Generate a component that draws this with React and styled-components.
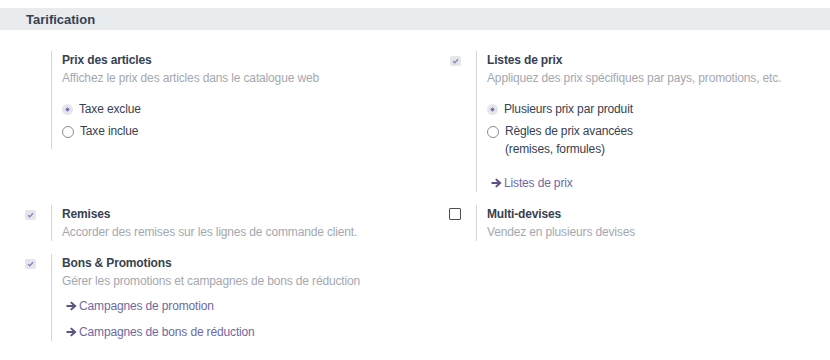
import styled, { createGlobalStyle } from "styled-components";

const GlobalStyle = createGlobalStyle`
  html, body {
    margin: 0;
    padding: 0;
    background: #fff;
  }
  body {
    font-family: "Liberation Sans", Arial, sans-serif;
    font-size: 12px;
    letter-spacing: -0.15px;
    color: #374151;
  }
`;

function Arrow() {
  return (
    <svg width="11" height="10" viewBox="0 0 11 10">
      <path
        d="M5.5 0.4 L10.6 5 L5.5 9.6 L4.1 8.2 L6.5 6 L0.5 6 L0.5 4 L6.5 4 L4.1 1.8 Z"
        fill="#5c5283"
      />
    </svg>
  );
}

function Setting({ checkbox, title, desc, children }) {
  return (
    <Box>
      <LeftPane>
        {checkbox === "checked" && (
          <DisabledCheck>
            <svg width="7" height="6" viewBox="0 0 7 6">
              <path
                d="M1 3.2 L2.8 4.8 L6 1.2"
                stroke="#8a80b8"
                strokeWidth="1.3"
                fill="none"
              />
            </svg>
          </DisabledCheck>
        )}
        {checkbox === "empty" && <EmptyCheck />}
      </LeftPane>
      <RightPane>
        <Title>{title}</Title>
        <Desc>{desc}</Desc>
        {children}
      </RightPane>
    </Box>
  );
}

function Radio({ checked, children }) {
  return (
    <RadioRow>
      <RadioDot checked={checked} />
      <RadioLabel>{children}</RadioLabel>
    </RadioRow>
  );
}

function Link({ children, top }) {
  return (
    <LinkRow top={top}>
      <Arrow />
      <LinkText>{children}</LinkText>
    </LinkRow>
  );
}

export default function App() {
  return (
    <>
      <GlobalStyle />
      <Page>
        <Header>Tarification</Header>
        <Grid>
          <Setting
            title="Prix des articles"
            desc="Affichez le prix des articles dans le catalogue web"
          >
            <RadioGroup bottom={9}>
              <Radio checked>Taxe exclue</Radio>
              <Radio>Taxe inclue</Radio>
            </RadioGroup>
          </Setting>
          <Setting
            checkbox="checked"
            title="Listes de prix"
            desc="Appliquez des prix spécifiques par pays, promotions, etc."
          >
            <RadioGroup>
              <Radio checked>Plusieurs prix par produit</Radio>
              <Radio>
                Règles de prix avancées
                <br />
                (remises, formules)
              </Radio>
            </RadioGroup>
            <Link top={16}>Listes de prix</Link>
          </Setting>
          <Setting
            checkbox="checked"
            title="Remises"
            desc="Accorder des remises sur les lignes de commande client."
          />
          <Setting
            checkbox="empty"
            title="Multi-devises"
            desc="Vendez en plusieurs devises"
          />
          <Setting
            checkbox="checked"
            title="Bons & Promotions"
            desc="Gérer les promotions et campagnes de bons de réduction"
          >
            <Link top={7}>Campagnes de promotion</Link>
            <Link top={8}>Campagnes de bons de réduction</Link>
          </Setting>
        </Grid>
      </Page>
    </>
  );
}

const Page = styled.div`
  width: 830px;
  padding-top: 8px;
`;

const Header = styled.div`
  height: 22px;
  line-height: 23px;
  background: #e9ecef;
  padding-left: 26px;
  font-size: 13px;
  font-weight: bold;
  letter-spacing: 0;
  color: #374151;
`;

const Grid = styled.div`
  display: grid;
  grid-template-columns: 425px 1fr;
  row-gap: 13px;
  align-items: start;
  padding-top: 21px;
`;

const Box = styled.div`
  display: flex;
`;

const LeftPane = styled.div`
  width: 52px;
  flex: none;
  padding: 5px 0 0 25px;
  box-sizing: border-box;
  border-right: 1px solid #d4d6da;
`;

const DisabledCheck = styled.div`
  width: 11px;
  height: 10px;
  border-radius: 2px;
  background: #e4e6eb;
  display: flex;
  align-items: center;
  justify-content: center;
`;

const EmptyCheck = styled.div`
  width: 10px;
  height: 10px;
  margin: -2px 0 0 -1px;
  border: 1.5px solid #4b4f56;
  border-radius: 1px;
  background: #fff;
`;

const RightPane = styled.div`
  padding-left: 10px;
  line-height: 18px;
`;

const Title = styled.div`
  font-weight: bold;
  color: #374151;
`;

const Desc = styled.div`
  color: #a3a8b0;
`;

const RadioGroup = styled.div`
  display: flex;
  flex-direction: column;
  gap: 4px;
  margin-top: 13px;
  margin-bottom: ${(p) => p.bottom || 0}px;
`;

const RadioRow = styled.div`
  display: flex;
  align-items: flex-start;
`;

const RadioDot = styled.span`
  flex: none;
  width: ${(p) => (p.checked ? 11 : 10)}px;
  height: ${(p) => (p.checked ? 11 : 10)}px;
  margin: 4px 6px 0 0;
  border-radius: 50%;
  box-sizing: content-box;
  border: ${(p) => (p.checked ? "none" : "1px solid #8a8f97")};
  background: ${(p) =>
    p.checked
      ? "radial-gradient(circle, #8077b0 0 1.8px, #e4e6eb 2.2px)"
      : "#fff"};
`;

const RadioLabel = styled.span`
  color: #374151;
`;

const LinkRow = styled.div`
  display: flex;
  align-items: center;
  gap: 2px;
  margin-top: ${(p) => p.top}px;
  padding-left: 4px;
`;

const LinkText = styled.span`
  color: #6f68a6;
`;
